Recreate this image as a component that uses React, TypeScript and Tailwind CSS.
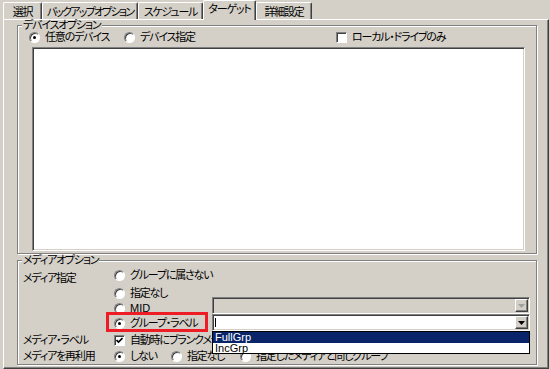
import type React from "react"

function Radio({ checked }: { checked?: boolean }) {
  return (
    <span className="flex items-center justify-center w-[11px] h-[11px] shrink-0 rounded-full border border-t-[#808080] border-l-[#808080] border-r-white border-b-white bg-white shadow-[inset_1px_1px_0_#404040]">
      {checked && <span className="w-[3px] h-[3px] rounded-full bg-black" />}
    </span>
  )
}

function Check({ checked }: { checked?: boolean }) {
  return (
    <span className="flex items-center justify-center w-[11px] h-[11px] shrink-0 border border-t-[#808080] border-l-[#808080] border-r-white border-b-white bg-white shadow-[inset_1px_1px_0_#404040]">
      {checked && (
        <svg width="7" height="7" viewBox="0 0 7 7">
          <path d="M0.5 3 L2.5 5 L6.5 1" stroke="black" strokeWidth="1.6" fill="none" />
        </svg>
      )}
    </span>
  )
}

function Option({ checked, children, className = "" }: { checked?: boolean; children: React.ReactNode; className?: string }) {
  return (
    <div className={`flex items-center gap-[5px] h-[12px] whitespace-nowrap ${className}`}>
      <Radio checked={checked} />
      <span>{children}</span>
    </div>
  )
}

function DropButton({ disabled }: { disabled?: boolean }) {
  return (
    <div className="w-[13px] h-full flex items-center justify-center bg-[#d4d0c8] border border-t-white border-l-white border-r-[#404040] border-b-[#404040] shadow-[inset_-1px_-1px_0_#808080]">
      <svg width="7" height="4" viewBox="0 0 7 4">
        <path d="M0 0 H7 L3.5 4 Z" fill={disabled ? "#a0a0a0" : "black"} />
      </svg>
    </div>
  )
}

const tabs = [
  { label: "選択", w: "w-[39px]" },
  { label: "バックアップオプション", w: "w-[96px] tracking-[-1.8px]" },
  { label: "スケジュール", w: "w-[65px]" },
  { label: "ターゲット", w: "w-[53px]", active: true },
  { label: "詳細設定", w: "w-[56px]" },
]

export default function App() {
  return (
    <div className="w-[550px] h-[369px] overflow-hidden bg-[#d4d0c8] flex flex-col text-black text-[11px] leading-[12px] tracking-[-1.2px] font-['Liberation_Sans','Noto_Sans_CJK_JP',sans-serif] [font-feature-settings:'palt']">
      {/* tab strip */}
      <div className="h-[19px] flex items-end pl-[3px]">
        {tabs.map((t) =>
          t.active ? (
            <div
              key={t.label}
              className={`${t.w} relative z-10 h-[20px] -mb-[1px] flex justify-center pt-[2px] bg-[#d4d0c8] border-t border-l border-white border-r border-r-[#404040] shadow-[inset_-1px_0_0_#808080] rounded-t-[2px] whitespace-nowrap`}
            >
              {t.label}
            </div>
          ) : (
            <div
              key={t.label}
              className={`${t.w} shrink-0 overflow-hidden h-[17px] flex justify-center pt-[3px] border-t border-l border-white border-r border-r-[#404040] shadow-[inset_-1px_0_0_#808080] rounded-t-[2px] whitespace-nowrap`}
            >
              {t.label}
            </div>
          )
        )}
      </div>

      {/* tab page */}
      <div className="ml-[3px] w-[546px] flex-1 border-t border-l border-white border-r border-b border-r-[#404040] border-b-[#404040] shadow-[inset_-1px_-1px_0_#808080] pl-[13px] pr-[11px]">
        <fieldset className="border border-[#808080] shadow-[inset_1px_1px_0_#fff,1px_1px_0_#fff] pb-[2px]">
          <legend className="ml-[4px] px-[1px] bg-[#d4d0c8] leading-[11px]">デバイスオプション</legend>
          <div className="h-[12px] flex items-center pl-[11px]">
            <Option checked className="w-[95px]">任意のデバイス</Option>
            <Option className="w-[212px]">デバイス指定</Option>
            <div className="flex items-center gap-[5px] whitespace-nowrap">
              <Check />
              <span>ローカル・ドライブのみ</span>
            </div>
          </div>
          <div className="mt-[4px] ml-[14px] mr-[11px] h-[204px] bg-white border border-t-[#808080] border-l-[#808080] border-r-white border-b-white shadow-[inset_1px_1px_0_#404040,inset_-1px_-1px_0_#d4d0c8]" />
        </fieldset>

        <fieldset className="mt-[1px] border border-[#808080] shadow-[inset_1px_1px_0_#fff,1px_1px_0_#fff] pb-[2px]">
          <legend className="ml-[4px] px-[1px] bg-[#d4d0c8] leading-[11px]">メディアオプション</legend>

          <div className="flex">
            <div className="w-[96px] pl-[5px] pt-[6px] whitespace-nowrap">メディア指定</div>
            <div className="w-[98px] flex flex-col">
              <Option className="mt-[3px]">グループに属さない</Option>
              <Option className="mt-[6px]">指定なし</Option>
              <Option className="mt-[3px] tracking-normal">MID</Option>
              <div className="relative mt-[3px]">
                <Option checked>グループ・ラベル</Option>
                <div className="absolute -top-[5px] -left-[8px] w-[102px] h-[20px] border-[3px] border-[#ee1c24]" />
              </div>
            </div>
            <div className="flex-1 mr-[6px] pt-[31px] relative">
              <div className="h-[17px] flex border border-t-[#808080] border-l-[#808080] border-r-white border-b-white shadow-[inset_1px_1px_0_#404040,inset_-1px_-1px_0_#d4d0c8] bg-[#d4d0c8] p-[1px] pl-[2px]">
                <div className="flex-1" />
                <DropButton disabled />
              </div>
              <div className="h-[17px] flex border border-t-[#808080] border-l-[#808080] border-r-white border-b-white shadow-[inset_1px_1px_0_#404040,inset_-1px_-1px_0_#d4d0c8] bg-white p-[1px] pl-[2px]">
                <div className="flex-1 flex items-center">
                  <div className="w-[1px] h-[9px] bg-black" />
                </div>
                <DropButton />
              </div>
              <div className="absolute left-0 right-0 top-full z-10 bg-white border border-black tracking-normal">
                <div className="h-[11px] leading-[11px] pl-[2px] bg-[#0a246a] text-white">FullGrp</div>
                <div className="h-[10px] leading-[10px] pl-[2px]">IncGrp</div>
              </div>
            </div>
          </div>

          <div className="mt-[3px] h-[12px] flex items-center whitespace-nowrap">
            <div className="w-[96px] pl-[5px]">メディア・ラベル</div>
            <div className="flex items-center gap-[5px]">
              <Check checked />
              <span>自動時にブランクメディアを使用</span>
            </div>
          </div>
          <div className="mt-[4px] h-[12px] flex items-center whitespace-nowrap">
            <div className="w-[96px] pl-[5px]">メディアを再利用</div>
            <Option checked className="w-[57px]">しない</Option>
            <Option className="w-[69px]">指定なし</Option>
            <Option>指定したメディアと同じグループ</Option>
          </div>
        </fieldset>
      </div>
    </div>
  )
}
